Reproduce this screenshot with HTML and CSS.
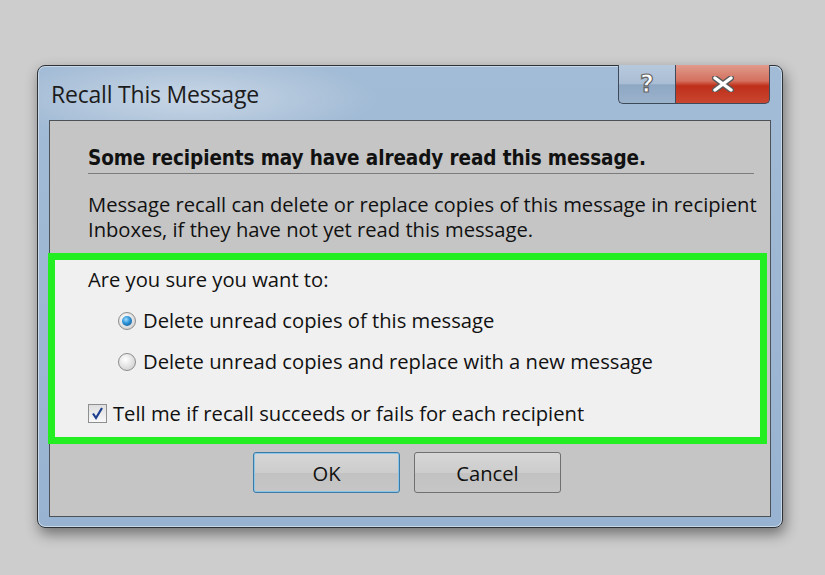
FILE: index.html
```html
<!doctype html>
<html lang="en">
<head>
  <meta charset="UTF-8">
  <meta name="viewport" content="width=device-width, initial-scale=1.0">
  <title>Recall This Message</title>
  <link rel="stylesheet" href="styles.css">
</head>
<body>
  <div class="window">
    <div class="titlebar">
      <h1 class="title">Recall This Message</h1>
      <div class="caption-buttons">
        <button class="cap help" aria-label="Help">?</button>
        <button class="cap close" aria-label="Close">
          <svg width="22" height="16" viewBox="0 0 22 16">
            <path d="M3 2 L19 14 M19 2 L3 14" stroke="#5a5a5a" stroke-width="6" stroke-linecap="round"/>
            <path d="M3 2 L19 14 M19 2 L3 14" stroke="#fff" stroke-width="3.4" stroke-linecap="round"/>
          </svg>
        </button>
      </div>
    </div>

    <div class="client">
      <h2 class="heading">Some recipients may have already read this message.</h2>
      <p class="info">Message recall can delete or replace copies of this message in recipient Inboxes, if they have not yet read this message.</p>

      <section class="choices">
        <p class="ask">Are you sure you want to:</p>
        <label class="option"><span class="radio checked"></span>Delete unread copies of this message</label>
        <label class="option"><span class="radio"></span>Delete unread copies and replace with a new message</label>
        <label class="check-row">
          <span class="checkbox">
            <svg width="17" height="17" viewBox="0 0 17 17"><path d="M4 8.5 L7 13 L13 3" fill="none" stroke="#1d3f8f" stroke-width="2.2"/></svg>
          </span>Tell me if recall succeeds or fails for each recipient
        </label>
      </section>

      <div class="actions">
        <button class="btn default">OK</button>
        <button class="btn">Cancel</button>
      </div>
    </div>
  </div>
</body>
</html>
```

FILE: styles.css
```css
body { margin: 0; background: #cdcdcd; font-family: 'Open Sans', 'Noto Sans', sans-serif; color: #111; height: 575px; overflow: hidden; }

.window { box-sizing: border-box; width: 746px; height: 463px; margin: 65px 0 0 37px; border: 1px solid #2e3236; border-radius: 8px; padding: 0 11px 10px 11px;
  background: radial-gradient(ellipse 190px 45px at 150px 32px, #c7d6e6 0%, #b3c7dc 55%, rgba(160,185,214,0) 100%), linear-gradient(#a2bbd6, #98b3d1);
  box-shadow: 2px 6px 14px rgba(0,0,0,.45), inset 0 0 0 1px #c9d8e8; display: flex; flex-direction: column; }

.titlebar { display: flex; justify-content: space-between; align-items: flex-start; height: 54px; flex: none; }
.title { margin: 12px 0 0 2px; font-size: 23px; font-weight: normal; color: #1c1c1c; letter-spacing: -0.2px; }

.caption-buttons { display: flex; margin: -1px 1px 0 0; }
.cap { box-sizing: border-box; height: 39px; border: 1px solid #3e4a59; border-top: none; padding: 0; display: flex; align-items: center; justify-content: center; }
.help { width: 57px; border-radius: 0 0 0 5px; border-right: none; background: linear-gradient(#b8c9dd 0%, #a9bdd4 50%, #8ea7c3 52%, #9bb2cc 100%);
  color: #fff; font: bold 24px 'DejaVu Sans', sans-serif; -webkit-text-stroke: 1.2px #666; }
.close { width: 95px; border-radius: 0 0 5px 0; background: linear-gradient(#e09a8c 0%, #d4705e 42%, #bf2f1a 55%, #c94630 100%); }

.client { flex: 1; border: 1px solid #4c5258; background: #c5c5c5; display: flex; flex-direction: column; }

.heading { margin: 26px 16px 0 38px; padding-bottom: 4px; border-bottom: 1px solid #7c7c7c; font: bold 20.5px/22px 'DejaVu Sans Condensed', 'DejaVu Sans', sans-serif; letter-spacing: -0.1px; }
.info { margin: 18px 10px 0 38px; font-size: 20.2px; line-height: 25px; }

.choices { margin: 11px 3px 0 -2px; border: 7px solid #22ee22; background: #f0f0f0; padding: 4px 0 9px 33px; display: flex; flex-direction: column; }
.ask { margin: 0 0 6px; font-size: 20.2px; line-height: 30px; }
.option { display: flex; align-items: center; gap: 7px; margin-left: 30px; font-size: 20.2px; line-height: 41px; }
.radio { width: 16px; height: 16px; border-radius: 50%; border: 1px solid #8d8d8d; background: radial-gradient(circle at 40% 35%, #fff, #d8d8d8 70%, #c4c4c4); position: relative; }
.radio.checked::after { content: ""; position: absolute; left: 3px; top: 3px; width: 10px; height: 10px; border-radius: 50%; background: radial-gradient(circle at 40% 35%, #9fdcff, #2a8fd4 45%, #0f4f86); }
.check-row { display: flex; align-items: center; gap: 6px; margin-top: 16px; font-size: 20.2px; line-height: 30px; }
.checkbox { box-sizing: border-box; width: 19px; height: 19px; border: 1px solid #8e8f8f; background: linear-gradient(#dedede, #f8f8f8); display: flex; align-items: center; justify-content: center; }

.actions { display: flex; gap: 14px; margin: 8px 0 0 203px; }
.btn { width: 147px; height: 41px; border: 1px solid #707070; border-radius: 3px; background: linear-gradient(#d6d6d6 0%, #cdcdcd 50%, #c2c2c2 52%, #c6c6c6 100%);
  font-family: 'Open Sans', sans-serif; font-size: 20.2px; color: #111; padding: 0; }
.btn.default { border-color: #3a7ba8; box-shadow: inset 0 0 0 1px #8cc4e6; }
```
